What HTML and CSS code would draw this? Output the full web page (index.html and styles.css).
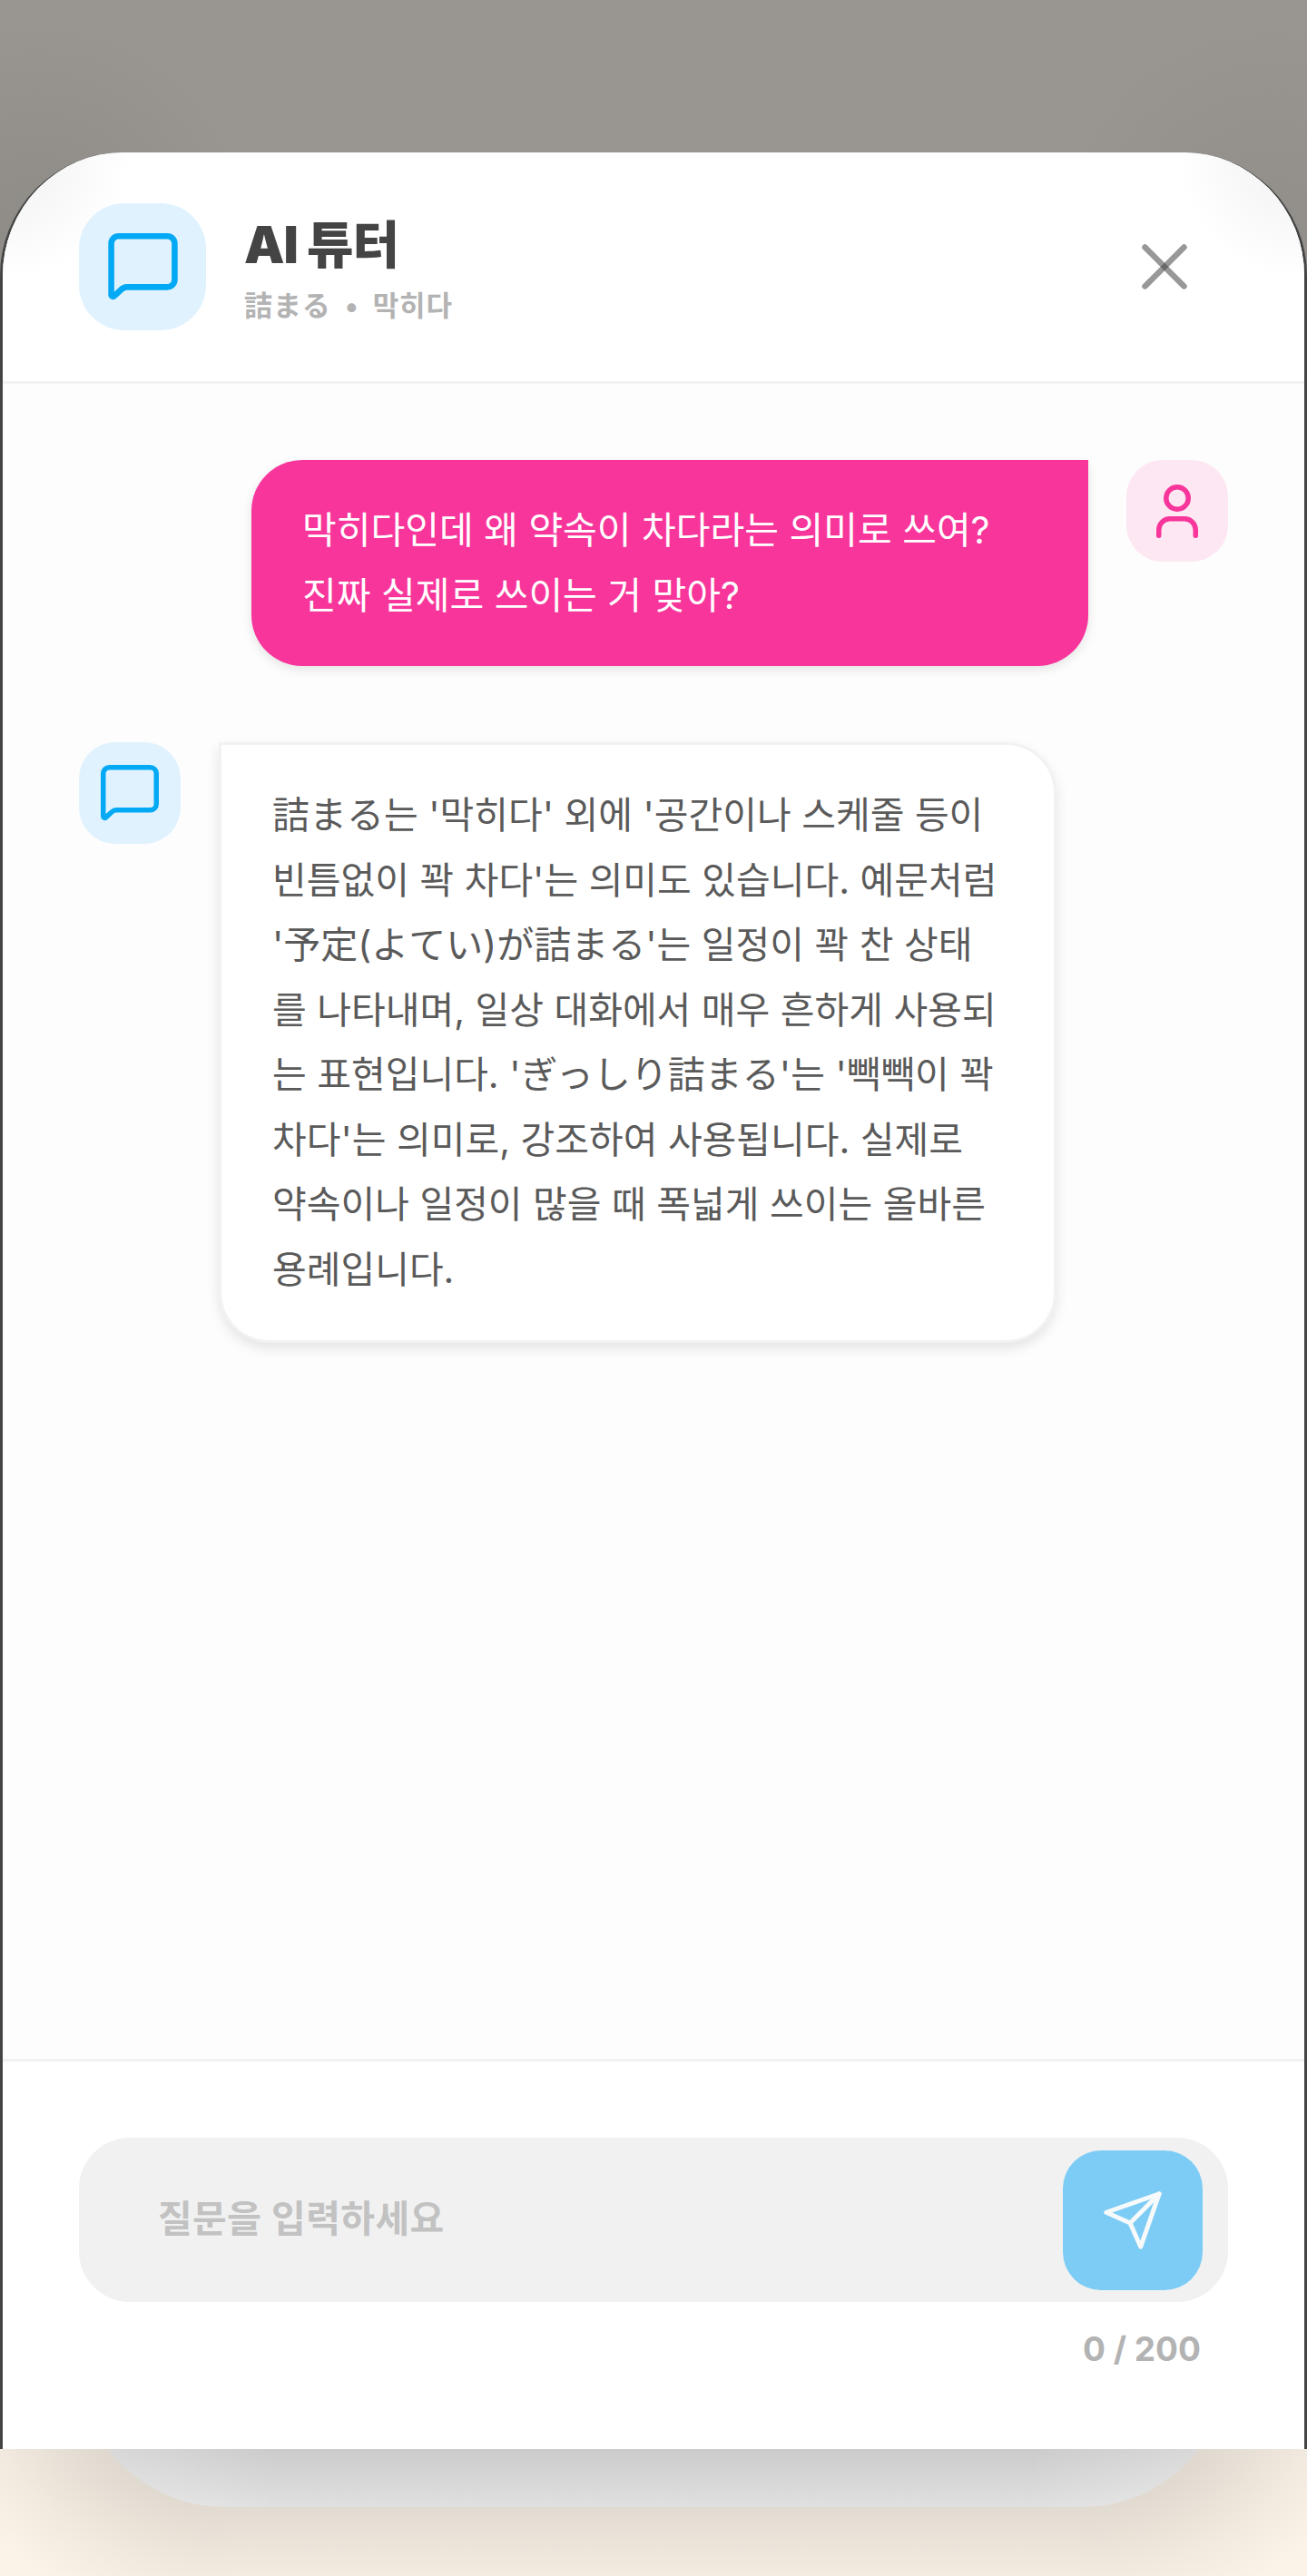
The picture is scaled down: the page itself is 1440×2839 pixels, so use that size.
FILE: index.html
```html
<!DOCTYPE html>
<html lang="ko">
<head>
  <meta charset="UTF-8">
  <title>AI 튜터</title>
  <link rel="stylesheet" href="styles.css">
</head>
<body>

<div class="screen">
  <div class="modal">

    <header class="modal-header">
      <div class="avatar avatar-large avatar-ai">
        <svg class="icon-chat-large" viewBox="0 0 64 62" fill="none" stroke="#03a9f4" stroke-width="5.5" stroke-linejoin="round">
          <path d="M9.5 2.75H54.5a6.75 6.75 0 0 1 6.75 6.75V43a6.75 6.75 0 0 1-6.75 6.75H17c-2 0-3.5.8-5 2.2L5.5 58c-1 1-2.75.3-2.75-1.2V9.5A6.75 6.75 0 0 1 9.5 2.75z"/>
        </svg>
      </div>
      <div class="title-block">
        <h1 class="title">AI 튜터</h1>
        <p class="subtitle">詰まる <span class="dot">•</span> 막히다</p>
      </div>
      <button class="close-btn" aria-label="닫기">
        <svg class="icon-close" viewBox="0 0 50 50" fill="none" stroke="#444" stroke-opacity="0.55" stroke-width="6.5" stroke-linecap="round">
          <line x1="3.5" y1="3.5" x2="46.5" y2="46.5"/>
          <line x1="46.5" y1="3.5" x2="3.5" y2="46.5"/>
        </svg>
      </button>
    </header>

    <main class="messages">
      <div class="row row-user">
        <div class="bubble bubble-user">막히다인데 왜 약속이 차다라는 의미로 쓰여?<br>진짜 실제로 쓰이는 거 맞아?</div>
        <div class="avatar avatar-user">
          <svg class="icon-user" viewBox="0 0 46 59" fill="none" stroke="#f7359b" stroke-width="5.5" stroke-linecap="round">
            <circle cx="23" cy="15" r="12.25"/>
            <path d="M2.75 56.25V50a12.25 12.25 0 0 1 12.25-12.25H31A12.25 12.25 0 0 1 43.25 50v6.25"/>
          </svg>
        </div>
      </div>

      <div class="row">
        <div class="avatar avatar-ai">
          <svg class="icon-chat" viewBox="0 0 64 62" fill="none" stroke="#03a9f4" stroke-width="5.5" stroke-linejoin="round">
            <path d="M9.5 2.75H54.5a6.75 6.75 0 0 1 6.75 6.75V43a6.75 6.75 0 0 1-6.75 6.75H17c-2 0-3.5.8-5 2.2L5.5 58c-1 1-2.75.3-2.75-1.2V9.5A6.75 6.75 0 0 1 9.5 2.75z"/>
          </svg>
        </div>
        <div class="bubble bubble-ai">詰まる는 '막히다' 외에 '공간이나 스케줄 등이<br>빈틈없이 꽉 차다'는 의미도 있습니다. 예문처럼<br>'予定(よてい)が詰まる'는 일정이 꽉 찬 상태<br>를 나타내며, 일상 대화에서 매우 흔하게 사용되<br>는 표현입니다. 'ぎっしり詰まる'는 '빽빽이 꽉<br>차다'는 의미로, 강조하여 사용됩니다. 실제로<br>약속이나 일정이 많을 때 폭넓게 쓰이는 올바른<br>용례입니다.</div>
      </div>
    </main>

    <footer class="composer">
      <div class="input-wrap">
        <input class="question-input" type="text" placeholder="질문을 입력하세요">
        <button class="send-btn" aria-label="보내기">
          <svg class="icon-send" viewBox="0 0 24 24" fill="none" stroke="#f7fafb" stroke-width="1.7" stroke-linecap="round" stroke-linejoin="round">
            <line x1="22" y1="2" x2="11" y2="13"/>
            <polygon points="22 2 15 22 11 13 2 9 22 2"/>
          </svg>
        </button>
      </div>
      <div class="counter">0 / 200</div>
    </footer>

  </div>

  <div class="base">
    <div class="base-card"></div>
  </div>
</div>

</body>
</html>
```

FILE: styles.css
```css
* {
  box-sizing: border-box;
}
body {
  margin: 0;
  font-family: Inter, "Noto Sans CJK KR", sans-serif;
}
.screen {
  width: 1440px;
  height: 2839px;
  padding-top: 168px;
  background:
    radial-gradient(circle at 40px 260px, rgba(0, 0, 0, 0.07), rgba(0, 0, 0, 0) 240px),
    radial-gradient(circle at 1400px 260px, rgba(0, 0, 0, 0.05), rgba(0, 0, 0, 0) 240px),
    #999691;
  overflow: hidden;
}

/* modal */
.modal {
  display: flex;
  flex-direction: column;
  height: 2531px;
  background-color: #fff;
  border-left: 3px solid #444;
  border-right: 3px solid #444;
  border-radius: 136px 136px 0 0;
  overflow: hidden;
}
.modal-header {
  display: flex;
  align-items: center;
  flex-shrink: 0;
  height: 255px;
  padding: 0 84px;
  border-bottom: 3px solid #f2f2f2;
  background:
    radial-gradient(circle at 0 0, #f0f0f0, rgba(255, 255, 255, 0) 140px),
    radial-gradient(circle at 100% 0, #f0f0f0, rgba(255, 255, 255, 0) 140px),
    #fff;
}
.avatar {
  display: flex;
  align-items: center;
  justify-content: center;
  flex-shrink: 0;
  width: 112px;
  height: 112px;
  border-radius: 40px;
}
.avatar-large {
  width: 140px;
  height: 140px;
  border-radius: 50px;
}
.avatar-ai {
  background-color: #e0f2fe;
}
.avatar-user {
  background-color: #fde7f3;
}
.icon-chat-large {
  width: 77px;
  height: 74px;
}
.icon-chat {
  width: 64px;
  height: 62px;
}
.icon-user {
  width: 46px;
  height: 59px;
}
.title-block {
  flex: 1;
  margin-left: 42px;
}
.title {
  margin: 0;
  font-size: 56px;
  line-height: 72px;
  font-weight: 900;
  letter-spacing: -1px;
  color: #444;
}
.subtitle {
  margin: 11px 0 -3px;
  font-size: 31px;
  line-height: 40px;
  font-weight: 600;
  letter-spacing: 0.9px;
  color: #b3b3b3;
}
.dot {
  margin: 0 6px;
}
.close-btn {
  display: flex;
  align-items: center;
  justify-content: center;
  width: 140px;
  height: 140px;
  padding: 0;
  border: none;
  background: none;
}
.icon-close {
  width: 50px;
  height: 50px;
}

/* messages */
.messages {
  flex: 1;
  padding: 84px 84px 0;
  background-color: #fdfdfd;
}
.row {
  display: flex;
  gap: 42px;
  align-items: flex-start;
  margin-bottom: 84px;
}
.row-user {
  justify-content: flex-end;
}
.bubble {
  padding: 42px 56px;
  font-size: 41px;
  line-height: 71.5px;
  white-space: nowrap;
  border-radius: 56px;
}
.bubble-user {
  width: 922px;
  color: #fff;
  background-color: #f7359b;
  border-top-right-radius: 0;
  box-shadow: 0 4px 12px rgba(0, 0, 0, 0.1);
}
.bubble-ai {
  width: 923px;
  color: #5a5a5a;
  background-color: #fff;
  border: 3px solid #f2f2f2;
  border-top-left-radius: 0;
  box-shadow: 0 6px 14px rgba(0, 0, 0, 0.1);
}

/* composer */
.composer {
  flex-shrink: 0;
  height: 430px;
  padding: 84px 84px 0;
  border-top: 3px solid #f2f2f2;
  background-color: #fff;
}
.input-wrap {
  display: flex;
  align-items: center;
  height: 181px;
  padding: 0 28px 0 87px;
  background-color: #f1f1f1;
  border-radius: 56px;
}
.question-input {
  flex: 1;
  min-width: 0;
  padding: 0 0 3px;
  border: none;
  outline: none;
  background: none;
  font-family: Inter, "Noto Sans CJK KR", sans-serif;
  font-size: 41px;
  font-weight: 600;
  letter-spacing: 0.4px;
}
.question-input::placeholder {
  color: #c2c2c2;
}
.send-btn {
  display: flex;
  align-items: center;
  justify-content: center;
  flex-shrink: 0;
  width: 154px;
  height: 154px;
  padding: 0;
  border: none;
  border-radius: 42px;
  background-color: #7dccf5;
}
.icon-send {
  width: 70px;
  height: 70px;
}
.counter {
  margin-top: 30px;
  padding-right: 30px;
  text-align: right;
  font-size: 37px;
  line-height: 44px;
  font-weight: 700;
  color: #b3b3b3;
}

/* what is left of the page under the modal: the card's soft shadow is
   painted as gradients, two corner tiles and a middle strip */
.base {
  display: flex;
  align-items: flex-end;
  height: 140px;
  padding: 0 87px 76px;
  background-color: #fbf3e8;
  background-image:
    radial-gradient(ellipse 340px 290px at 248px -96px, rgba(0, 0, 0, 0.115) 50%, rgba(0, 0, 0, 0.1) 55%, rgba(0, 0, 0, 0.04) 80%, rgba(0, 0, 0, 0) 100%),
    radial-gradient(ellipse 340px 290px at 0 -96px, rgba(0, 0, 0, 0.115) 50%, rgba(0, 0, 0, 0.1) 55%, rgba(0, 0, 0, 0.04) 80%, rgba(0, 0, 0, 0) 100%),
    linear-gradient(to bottom, rgba(0, 0, 0, 0.1) 64px, rgba(0, 0, 0, 0.033) 140px);
  background-size: 248px 140px, 248px 140px, 944px 140px;
  background-position: 0 0, 100% 0, 248px 0;
  background-repeat: no-repeat;
  overflow: hidden;
}
.base-card {
  width: 100%;
  height: 300px;
  border-radius: 0 0 160px 160px;
  background:
    linear-gradient(to right, rgba(255, 255, 255, 0.3), rgba(255, 255, 255, 0) 220px, rgba(255, 255, 255, 0) 1046px, rgba(255, 255, 255, 0.3)),
    linear-gradient(to top, #e0e0e0, #cbcbcb 64px);
}
```
